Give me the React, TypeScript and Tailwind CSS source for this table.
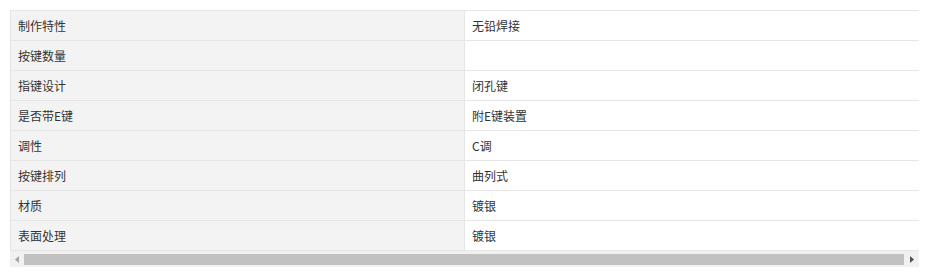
const specs: [string, string][] = [
  ['制作特性', '无铅焊接'],
  ['按键数量', ''],
  ['指键设计', '闭孔键'],
  ['是否带E键', '附E键装置'],
  ['调性', 'C调'],
  ['按键排列', '曲列式'],
  ['材质', '镀银'],
  ['表面处理', '镀银'],
];

function ScrollBar() {
  return (
    <div className="flex h-[16px] items-center bg-[#f1f1f1]">
      <div className="flex w-[14px] justify-center">
        <svg width="4" height="7" viewBox="0 0 4 7">
          <path d="M4 0 L0 3.5 L4 7 Z" fill="#a3a3a3" />
        </svg>
      </div>
      <div className="h-[11px] flex-1 bg-[#c1c1c1]" />
      <div className="flex w-[15px] justify-center">
        <svg width="4" height="7" viewBox="0 0 4 7">
          <path d="M0 0 L4 3.5 L0 7 Z" fill="#505050" />
        </svg>
      </div>
    </div>
  );
}

export default function App() {
  return (
    <div className="h-[279px] w-[936px] bg-white pl-[10px] pt-[10px] font-['Noto_Sans_CJK_SC',sans-serif] text-[12px] text-[#333]">
      <div className="w-[909px]">
        <table className="w-full table-fixed border-collapse">
          <tbody>
            {specs.map(([name, value]) => (
              <tr key={name} className="h-[30px]">
                <td className="w-[454px] border border-[#e6e6e6] bg-[#f3f3f3] px-[7px] align-middle leading-none">
                  {name}
                </td>
                <td className="border-y border-l border-[#e6e6e6] bg-white px-[7px] align-middle leading-none">
                  {value}
                </td>
              </tr>
            ))}
          </tbody>
        </table>
        <ScrollBar />
      </div>
    </div>
  );
}
